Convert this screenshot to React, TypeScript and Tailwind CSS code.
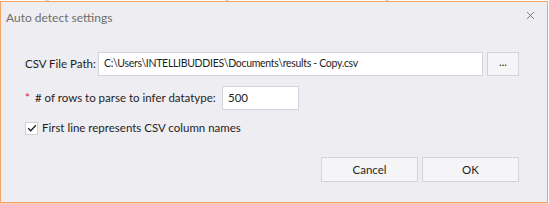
import { X } from "lucide-react";

const font = { fontFamily: 'Lato, "Segoe UI", "Noto Sans", sans-serif' };

export default function App() {
  return (
    <div className="h-[204px] w-[549px] overflow-hidden bg-white" style={font}>
      {/* background ticks behind the dialog */}
      <div className="relative h-px">
        <div className="absolute left-[45px] top-0 h-px w-[4px] bg-[#d8d8d8]" />
        <div className="absolute left-[225px] top-0 h-px w-[4px] bg-[#d8d8d8]" />
        <div className="absolute left-[385px] top-0 h-px w-[4px] bg-[#d8d8d8]" />
      </div>

      <div className="flex h-[202px] w-[548px] flex-col border border-[#f2a465] bg-[#eeedf2] text-[11.5px] whitespace-nowrap text-[#1e1e1e]">
        {/* title bar */}
        <div className="flex h-[32px] items-center justify-between pl-[5px] pr-[10px]">
          <span className="text-[12px] text-[#6d6d6d]">Auto detect settings</span>
          <X className="mb-[6px] h-[13px] w-[13px] text-[#505050]" strokeWidth={1.25} />
        </div>

        <div className="flex flex-col pl-[24px] pr-[28px] pt-[18px]">
          {/* csv path */}
          <div className="flex h-[24px] items-center">
            <span className="w-[73px] shrink-0">CSV File Path:</span>
            <div className="flex h-[24px] w-[385px] items-center border border-[#d3d3dc] bg-white px-[5px] text-[10.5px] tracking-[-0.3px]">
              C:\Users\INTELLIBUDDIES\Documents\results - Copy.csv
            </div>
            <button className="ml-[4px] flex h-[24px] w-[32px] items-center justify-center border border-[#d3d3dc] bg-[#f5f5f7] pb-[4px] text-[11px]">
              ...
            </button>
          </div>

          {/* rows to parse */}
          <div className="mt-[10px] flex h-[24px] items-center">
            <span className="w-[10px] shrink-0 text-[#e81123]">*</span>
            <span className="w-[187px] shrink-0">
              # of rows to parse to infer datatype:
            </span>
            <div className="flex h-[24px] w-[77px] items-center border border-[#d3d3dc] bg-white px-[5px]">
              500
            </div>
          </div>

          {/* checkbox */}
          <div className="mt-[10px] flex h-[16px] items-center">
            <div className="flex h-[13px] w-[13px] items-center justify-center border border-[#cfcfd6] bg-white">
              <svg viewBox="0 0 10 10" className="h-[10px] w-[10px]">
                <path d="M1.2 5.2 L3.8 7.8 L8.8 2.2" fill="none" stroke="#1e1e1e" strokeWidth="1.3" />
              </svg>
            </div>
            <span className="ml-[4px]">First line represents CSV column names</span>
          </div>
        </div>

        {/* buttons */}
        <div className="mt-[21px] flex justify-end gap-[4px] pr-[28px]">
          <button className="h-[25px] w-[97px] border border-[#d3d3dc] bg-[#f5f5f7]">
            Cancel
          </button>
          <button className="h-[25px] w-[97px] border border-[#d3d3dc] bg-[#f5f5f7]">
            OK
          </button>
        </div>
      </div>
      <div className="h-px w-[548px] bg-[#f9cfae]" />
    </div>
  );
}
